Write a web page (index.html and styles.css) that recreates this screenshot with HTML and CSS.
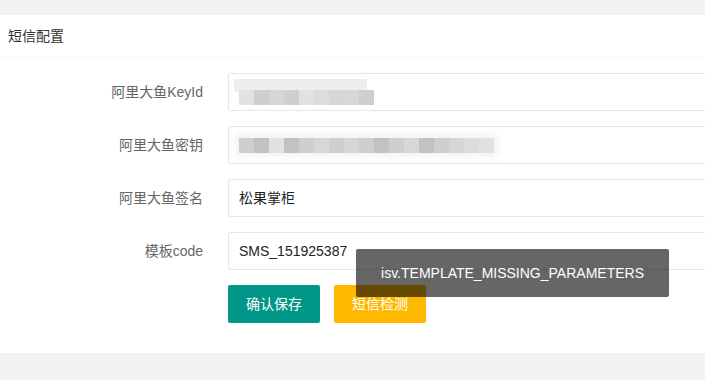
FILE: index.html
```html
<!DOCTYPE html>
<html lang="zh-CN">
<head>
    <meta charset="UTF-8">
    <meta name="viewport" content="width=device-width, initial-scale=1.0">
    <title>短信配置</title>
    <link rel="stylesheet" href="styles.css">
</head>
<body>
    <div class="card">
        <div class="card-header">短信配置</div>
        <div class="card-body">
            <form class="sms-form">
                <div class="form-item">
                    <label class="form-label">阿里大鱼KeyId</label>
                    <div class="field">
                        <span class="mosaic mosaic-short">
                            <i class="s1"></i><i class="s3"></i><i class="s2"></i><i class="s3"></i><i class="s1"></i><i class="s4"></i><i class="s2"></i><i class="s5"></i><i class="s3"></i>
                        </span>
                    </div>
                </div>
                <div class="form-item">
                    <label class="form-label">阿里大鱼密钥</label>
                    <div class="field">
                        <span class="mosaic">
                            <i class="s3"></i><i class="s6"></i><i class="s1"></i><i class="s6"></i><i class="s3"></i><i class="s5"></i><i class="s3"></i><i class="s2"></i><i class="s3"></i><i class="s6"></i><i class="s3"></i><i class="s5"></i><i class="s6"></i><i class="s3"></i><i class="s2"></i><i class="s4"></i><i class="s1"></i>
                        </span>
                    </div>
                </div>
                <div class="form-item">
                    <label class="form-label">阿里大鱼签名</label>
                    <div class="field">松果掌柜</div>
                </div>
                <div class="form-item">
                    <label class="form-label">模板code</label>
                    <div class="field">SMS_151925387</div>
                </div>
                <div class="form-item buttons">
                    <button type="button" class="btn btn-save">确认保存</button>
                    <button type="button" class="btn btn-check">短信检测</button>
                </div>
            </form>
        </div>
    </div>

    <div class="toast">isv.TEMPLATE_MISSING_PARAMETERS</div>
</body>
</html>
```

FILE: styles.css
```css
body {
    margin: 0;
    padding: 0;
    background-color: #f2f2f2;
    font-family: "Liberation Sans", "Noto Sans CJK SC", sans-serif;
    font-size: 14px;
    color: #333;
    overflow: hidden;
}

.card {
    margin-top: 15px;
    background: white;
    overflow: hidden;
}

.card-header {
    height: 42px;
    line-height: 42px;
    padding: 0 8px;
    border-bottom: 1px solid #f6f6f6;
    color: #333;
}

.card-body {
    padding: 15px 0;
}

.form-item {
    display: flex;
    margin-bottom: 15px;
}

.form-label {
    flex-shrink: 0;
    width: 203px;
    padding-right: 15px;
    margin-right: 10px;
    text-align: right;
    line-height: 38px;
    color: #666;
}

.field {
    flex-shrink: 0;
    width: 540px;
    height: 38px;
    box-sizing: border-box;
    border: 1px solid #e6e6e6;
    border-radius: 2px;
    padding: 0 10px;
    line-height: 36px;
    color: #222;
    display: flex;
    align-items: center;
}

.mosaic {
    display: flex;
    height: 15px;
    box-shadow: 0 0 6px 4px #f4f4f4;
    background: #f4f4f4;
}

.mosaic-short {
    margin-top: 10px;
    box-shadow: -6px -12px 0 -1px #eeeeee;
}

.mosaic i {
    width: 15px;
    height: 15px;
}

.s1 { background: #e2e2e2; }
.s2 { background: #d6d6d6; }
.s3 { background: #cfcfcf; }
.s4 { background: #dcdcdc; }
.s5 { background: #d4d8d8; }
.s6 { background: #c2c2c2; }

.buttons {
    margin-left: 228px;
    gap: 14px;
}

.btn {
    height: 38px;
    line-height: 38px;
    padding: 0 18px;
    border: none;
    border-radius: 2px;
    color: white;
    font-family: inherit;
    font-size: 14px;
    cursor: pointer;
}

.btn-save {
    background-color: #009688;
}

.btn-check {
    background-color: #ffb800;
}

.toast {
    position: absolute;
    left: 356px;
    top: 249px;
    width: 313px;
    box-sizing: border-box;
    padding: 12px 0;
    line-height: 24px;
    text-align: center;
    background-color: rgba(0, 0, 0, 0.6);
    color: white;
    border-radius: 2px;
}
```
